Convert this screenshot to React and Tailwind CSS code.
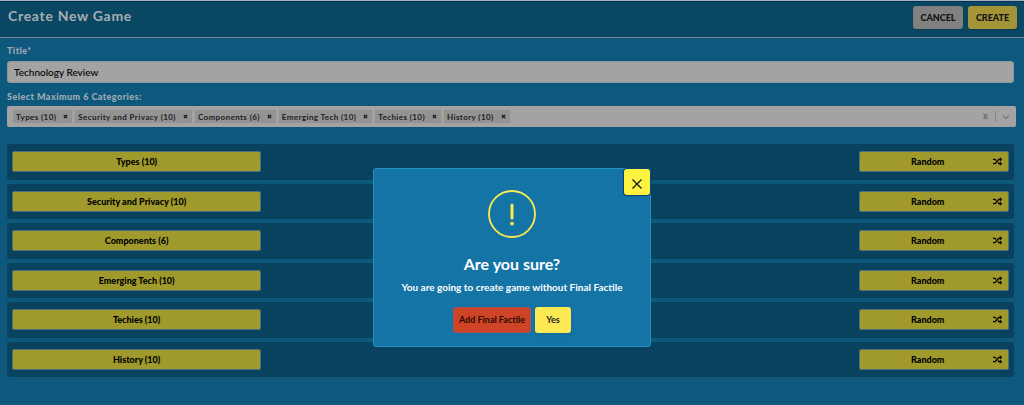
import React, { useState } from "react";
import { FaRandom } from "react-icons/fa";

const CATEGORIES = [
  "Types (10)",
  "Security and Privacy (10)",
  "Components (6)",
  "Emerging Tech (10)",
  "Techies (10)",
  "History (10)",
];

function Header() {
  return (
    <header className="flex h-[38px] items-start justify-between border-t border-b border-t-[#a3b1ba] border-b-[#738c9c] bg-[#0a4763] pt-[5px] pr-[7px] pl-2 shadow-[inset_0_1px_0_#06305a]">
      <h1 className="text-[14px] leading-5 font-bold tracking-wider text-[#a9adb1]">
        Create New Game
      </h1>
      <div className="flex gap-[5px]">
        <button
          type="button"
          className="h-[23px] w-[50px] rounded-[3px] bg-[#808080] text-[9px] font-black text-[#111] shadow-sm"
        >
          CANCEL
        </button>
        <button
          type="button"
          className="h-[23px] w-[49px] rounded-[3px] bg-[#a39537] text-[9px] font-black text-[#111] shadow-sm"
        >
          CREATE
        </button>
      </div>
    </header>
  );
}

function CategoryPicker() {
  return (
    <div className="mr-[-2px] flex h-[21px] items-center rounded-[2px] bg-[#a3a3a3] px-[6px]">
      <ul className="flex gap-[3px]">
        {CATEGORIES.map((name) => (
          <li
            key={name}
            className="flex h-[13px] items-center gap-[7px] rounded-[1px] bg-[#939393] pr-1 pl-[3px] text-[8px] font-bold text-[#1c1c1c]"
          >
            <span className="tracking-wider">{name}</span>
            <button type="button" aria-label={`Remove ${name}`} className="flex">
              <svg viewBox="0 0 6 6" className="size-[5px]" stroke="#111" strokeWidth="1.4">
                <path d="M1 1l4 4M5 1l-4 4" />
              </svg>
            </button>
          </li>
        ))}
      </ul>
      <input
        id="categories"
        type="text"
        className="min-w-0 flex-1 bg-transparent text-[8px] outline-none"
      />
      <button type="button" aria-label="Clear all" className="flex">
        <svg viewBox="0 0 8 8" className="size-[7px]" stroke="#707070" strokeWidth="1.5">
          <path d="M1.8 1l4.4 6M6.2 1l-4.4 6" />
        </svg>
      </button>
      <span className="mx-[6px] h-[11px] w-px bg-[#858585]" />
      <button type="button" aria-label="Show categories" className="flex">
        <svg viewBox="0 0 8 8" className="size-2" fill="none" stroke="#777" strokeWidth="1.3">
          <path d="M1 2.6l3 2.9 3-2.9" />
        </svg>
      </button>
    </div>
  );
}

function CategoryRow({ name }) {
  return (
    <li className="flex items-center justify-between rounded-[3px] bg-[#08425e] px-[5px]">
      <button
        type="button"
        className="h-[21px] w-1/4 rounded-[2px] border border-[#4a6f80] bg-[#9f9a2b] text-[9px] font-black text-black"
      >
        {name}
      </button>
      <button
        type="button"
        className="flex h-[21px] w-[15%] items-center rounded-[2px] border border-[#4a6f80] bg-[#9f9a2b] pr-[6px] pl-[2px] text-[9px] font-black text-black"
      >
        <span className="flex-1">Random</span>
        <FaRandom className="size-[9px]" aria-hidden="true" />
      </button>
    </li>
  );
}

function ConfirmDialog({ onClose }) {
  return (
    <div className="fixed inset-0 flex items-start justify-center pt-[168px]">
      <div
        role="dialog"
        aria-modal="true"
        aria-labelledby="confirm-title"
        className="relative flex w-[278px] flex-col items-center rounded-[3px] border border-[#2390c4] bg-[#1474a6] pt-[21px] pb-[13px] text-white"
      >
        <button
          type="button"
          aria-label="Close"
          onClick={onClose}
          className="absolute top-0 right-0 flex size-[26px] items-center justify-center rounded-[3px] bg-[#fbf340] shadow-[0_0_1px_1px_#0b3c6c]"
        >
          <svg viewBox="0 0 10 10" className="mt-1 size-[10px]" stroke="#111" strokeWidth="1.2">
            <path d="M0.5 0.5l9 9M9.5 0.5l-9 9" />
          </svg>
        </button>
        <svg viewBox="0 0 48 48" className="size-12" fill="none" stroke="#fce94f">
          <circle cx="24" cy="24" r="23" strokeWidth="1.8" />
          <path d="M24 15v13" strokeWidth="3" strokeLinecap="round" />
          <circle cx="24" cy="33.6" r="1.9" fill="#fce94f" stroke="none" />
        </svg>
        <h2 id="confirm-title" className="mt-4 text-[16px] leading-5 font-bold">
          Are you sure?
        </h2>
        <p className="mt-[7px] text-[10px] leading-3 font-bold">
          You are going to create game without Final Factile
        </p>
        <div className="mt-[14px] flex gap-1">
          <button
            type="button"
            className="h-[26px] w-[78px] rounded-[3px] border border-[#a8505a] bg-[#cf4427] text-[9px] font-bold text-[#2b0a05]"
          >
            Add Final Factile
          </button>
          <button
            type="button"
            className="h-[26px] w-9 rounded-[3px] bg-[#fde954] text-[9px] font-bold text-[#222] shadow-sm"
          >
            Yes
          </button>
        </div>
      </div>
    </div>
  );
}

export default function App() {
  const [title, setTitle] = useState("Technology Review");
  const [open, setOpen] = useState(true);
  return (
    <div className="flex min-h-screen flex-col bg-[#0d587c] font-['Lato','Open_Sans',sans-serif]">
      <Header />
      <main className="flex flex-1 flex-col pt-[7px] pr-[10px] pb-7 pl-[7px]">
        <label
          htmlFor="title"
          className="text-[9px] leading-3 font-black tracking-wider text-[#a0abb3]"
        >
          Title*
        </label>
        <input
          id="title"
          value={title}
          onChange={(e) => setTitle(e.target.value)}
          className="mt-1 h-[22px] w-full rounded-[3px] border border-[#8c989f] bg-[#a3a3a3] px-[6px] text-[10px] font-medium text-black outline-none"
        />
        <label
          htmlFor="categories"
          className="mt-2 mb-[3px] text-[9px] leading-3 font-black tracking-wider text-[#a0abb3]"
        >
          Select Maximum 6 Categories:
        </label>
        <CategoryPicker />
        <ul className="mt-[17px] grid flex-1 auto-rows-fr gap-1">
          {CATEGORIES.map((name) => (
            <CategoryRow key={name} name={name} />
          ))}
        </ul>
      </main>
      {open && <ConfirmDialog onClose={() => setOpen(false)} />}
    </div>
  );
}
